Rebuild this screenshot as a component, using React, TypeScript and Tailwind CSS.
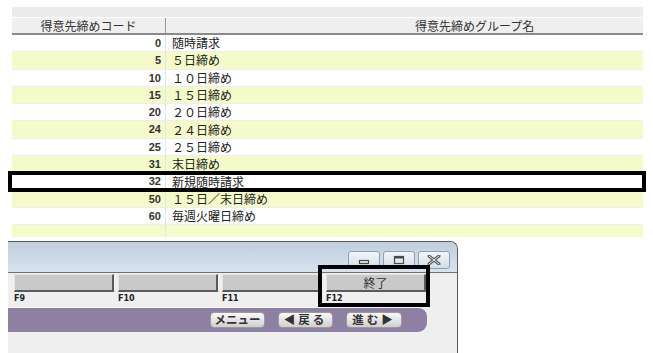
import React from 'react';

const rows = [
  { code: '0', name: '随時請求' },
  { code: '5', name: '５日締め' },
  { code: '10', name: '１０日締め' },
  { code: '15', name: '１５日締め' },
  { code: '20', name: '２０日締め' },
  { code: '24', name: '２４日締め' },
  { code: '25', name: '２５日締め' },
  { code: '31', name: '末日締め' },
  { code: '32', name: '新規随時請求' },
  { code: '50', name: '１５日／末日締め' },
  { code: '60', name: '毎週火曜日締め' },
  { code: '', name: '' },
];

const fkeys = [
  { key: 'F9', label: '' },
  { key: 'F10', label: '' },
  { key: 'F11', label: '' },
  { key: 'F12', label: '終了' },
];

function WinButton({ children }: { children: React.ReactNode }) {
  return (
    <div className="flex h-[18px] w-[32px] items-center justify-center rounded-[3px] border border-[#8d9fb4] bg-linear-to-b from-[#f2f6fa] to-[#d3dde8]">
      {children}
    </div>
  );
}

function NavButton({ children, w }: { children: React.ReactNode; w: string }) {
  return (
    <div
      className={`flex h-[16px] ${w} items-center justify-center rounded-[4px] border border-[#9a9a9a] bg-linear-to-b from-[#fafafa] to-[#cfcfcf] text-[11.5px] font-bold leading-none text-[#333]`}
    >
      {children}
    </div>
  );
}

export default function App() {
  return (
    <div className="relative h-[353px] w-[653px] overflow-hidden bg-white font-['Noto_Sans_CJK_JP',sans-serif] text-[#222]">
      {/* list */}
      <div className="w-[643px] pl-[12px] pt-[7px]">
        <div className="h-[10px] bg-[#ececec]" />
        <div className="mt-[1px] flex h-[17px] border-b-2 border-[#8a8a8a] bg-[#efefef] text-[12px] leading-[15px] text-[#333]">
          <div className="w-[154px] border-r border-[#9a9a9a] text-center">得意先締めコード</div>
          <div className="flex-1 pl-[249px]">得意先締めグループ名</div>
        </div>
        <div className="h-[202px] overflow-hidden">
          {rows.map((r, i) => (
            <div
              key={i}
              className={`flex h-[17.3px] items-center border-b border-[#ededed] ${i % 2 ? 'bg-[#f5facb]' : 'bg-white'}`}
            >
              <div className="h-full w-[154px] border-r border-[#e4e4e4] pr-[4px] text-right font-['Liberation_Sans',sans-serif] text-[11px] font-semibold leading-[16px] text-[#333]">
                {r.code}
              </div>
              <div className="pl-[6px] text-[12px] leading-[16px]">{r.name}</div>
            </div>
          ))}
        </div>
      </div>

      {/* window */}
      <div className="ml-[8px] mt-[4px] h-[112px] w-[450px] overflow-hidden rounded-tr-[8px] border-t border-r border-[#5a5a5a] bg-[#efefef]">
        <div className="flex h-[31px] justify-end gap-[3px] border-b border-[#707070] bg-linear-to-b from-[#c0cedd] to-[#d8e3ef] pr-[7px] pt-[9px]">
          <WinButton>
            <svg width="12" height="10" viewBox="0 0 12 10">
              <rect x="1.5" y="5.5" width="9" height="3" fill="none" stroke="#4a4a4a" strokeWidth="1.2" />
            </svg>
          </WinButton>
          <WinButton>
            <svg width="12" height="10" viewBox="0 0 12 10">
              <rect x="1.5" y="1.5" width="9" height="7" fill="none" stroke="#4a4a4a" strokeWidth="1.2" />
              <rect x="1.5" y="1.5" width="9" height="2" fill="#4a4a4a" />
            </svg>
          </WinButton>
          <WinButton>
            <svg width="14" height="10" viewBox="0 0 14 10">
              <path d="M2 1 L12 9 M12 1 L2 9" stroke="#555" strokeWidth="3" strokeLinecap="round" />
              <path d="M2 1 L12 9 M12 1 L2 9" stroke="#e6ecf2" strokeWidth="1" strokeLinecap="round" />
            </svg>
          </WinButton>
        </div>

        <div className="flex h-[34px] gap-[4px] pl-[6px] pt-[1px]">
          {fkeys.map((f) => (
            <div key={f.key} className="w-[100px]">
              <div className="flex h-[18px] items-center justify-center border-t border-l border-t-[#e4e4e4] border-l-[#e4e4e4] border-b-2 border-r-2 border-b-[#5a5a5a] border-r-[#5a5a5a] bg-[#c9c9c9] text-[12px] leading-none text-[#333]">
                {f.label}
              </div>
              <div className="mt-[3px] font-['DejaVu_Sans',sans-serif] text-[8px] font-bold leading-[8px] text-[#222]">
                {f.key}
              </div>
            </div>
          ))}
        </div>

        <div className="flex h-[25px] w-[419px] items-center justify-end gap-[13px] rounded-r-[9px] border-t border-[#f8f8f8] bg-[#8e80a2] pr-[25px]">
          <NavButton w="w-[55px]">メニュー</NavButton>
          <NavButton w="w-[55px]">
            <span className="tracking-[3px]">◀戻る</span>
          </NavButton>
          <NavButton w="w-[56px]">
            <span className="tracking-[3px]">進む▶</span>
          </NavButton>
        </div>
      </div>

      {/* highlight boxes */}
      <div className="absolute left-[8px] top-[171px] h-[21px] w-[638px] border-4 border-black" />
      <div className="absolute left-[318px] top-[265px] h-[42px] w-[112px] border-4 border-black" />
    </div>
  );
}
